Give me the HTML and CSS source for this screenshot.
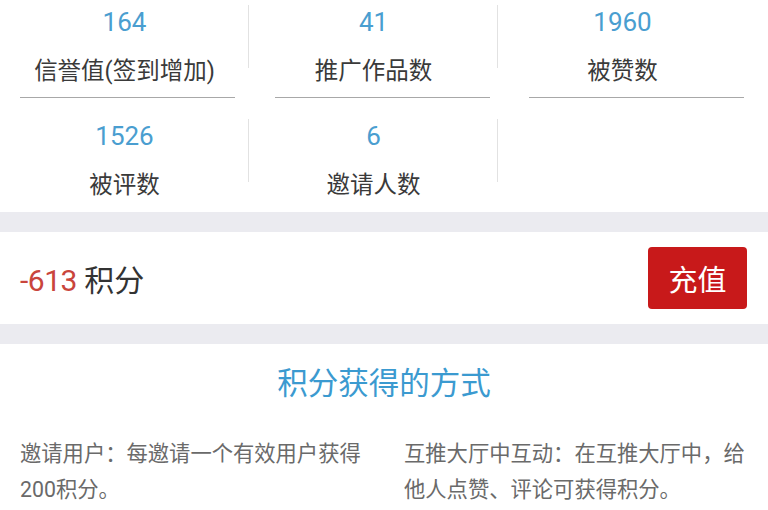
FILE: index.html
```html
<!DOCTYPE html>
<html lang="zh-CN">
<head>
<meta charset="utf-8">
<title>积分</title>
<link rel="stylesheet" href="styles.css">
</head>
<body>
<section class="stats">
  <div class="stat col1 divided">
    <div class="num">164</div>
    <div class="label">信誉值(签到增加)</div>
    <div class="rule"></div>
  </div>
  <div class="stat col2 divided">
    <div class="num">41</div>
    <div class="label">推广作品数</div>
    <div class="rule"></div>
  </div>
  <div class="stat col3">
    <div class="num">1960</div>
    <div class="label">被赞数</div>
    <div class="rule"></div>
  </div>
  <div class="stat col1 divided">
    <div class="num">1526</div>
    <div class="label">被评数</div>
  </div>
  <div class="stat col2 divided">
    <div class="num">6</div>
    <div class="label">邀请人数</div>
  </div>
  <div class="stat col3"></div>
</section>
<div class="band"></div>
<section class="points">
  <div class="points-text"><span class="points-num">-613</span> 积分</div>
  <button class="recharge">充值</button>
</section>
<div class="band"></div>
<section class="ways">
  <h2 class="ways-title">积分获得的方式</h2>
  <div class="ways-grid">
    <p class="way">邀请用户：每邀请一个有效用户获得200积分。</p>
    <p class="way">互推大厅中互动：在互推大厅中，给他人点赞、评论可获得积分。</p>
  </div>
</section>
</body>
</html>
```
FILE: styles.css
```css
html, body {
  margin: 0;
  padding: 0;
  background: #ffffff;
}
body {
  font-family: Roboto, "Noto Sans CJK SC", sans-serif;
  color: #333333;
  width: 768px;
  overflow: hidden;
}
.stats {
  display: grid;
  grid-template-columns: 249px 249px 249px;
  margin-top: -16px;
  height: 228px;
}
.stat {
  position: relative;
  height: 114px;
  box-sizing: border-box;
  padding-top: 23px;
  display: flex;
  flex-direction: column;
  align-items: center;
}
.stat.divided::after {
  content: "";
  position: absolute;
  right: 0;
  top: 21px;
  height: 63px;
  width: 1px;
  background: #e2e2e2;
}
.num {
  font-size: 26px;
  line-height: 30px;
  color: #4a9ed0;
}
.label {
  margin-top: 19px;
  font-size: 23.5px;
  line-height: 30px;
  color: #3a3a3a;
  white-space: nowrap;
}
.rule {
  margin-top: auto;
  align-self: flex-start;
  width: 215px;
  height: 1px;
  background: #a8a8a8;
}
.col1 .rule { margin-left: 20px; }
.col2 .rule { margin-left: 26px; }
.col3 .rule { margin-left: 31px; }
.band {
  height: 20px;
  background: #ebebf0;
}
.points {
  height: 92px;
  display: flex;
  align-items: center;
  justify-content: space-between;
  padding: 0 21px 0 20px;
}
.points-text {
  font-size: 30px;
  color: #333333;
}
.points-num {
  color: #c9453c;
  letter-spacing: -0.5px;
}
.recharge {
  width: 99px;
  height: 62px;
  border: none;
  border-radius: 4px;
  background: #c8191a;
  color: #ffffff;
  font-family: "Noto Sans CJK SC", sans-serif;
  font-size: 29px;
  padding: 0;
}
.ways {
  padding: 20px 20px 0;
}
.ways-title {
  margin: 0;
  text-align: center;
  font-weight: normal;
  font-size: 30.5px;
  line-height: 40px;
  color: #3b9ad0;
}
.ways-grid {
  display: grid;
  grid-template-columns: 344px 344px;
  column-gap: 40px;
  margin-top: 32px;
}
.way {
  margin: 0;
  font-size: 21.3px;
  line-height: 36px;
  color: #6a6a6a;
}
```
